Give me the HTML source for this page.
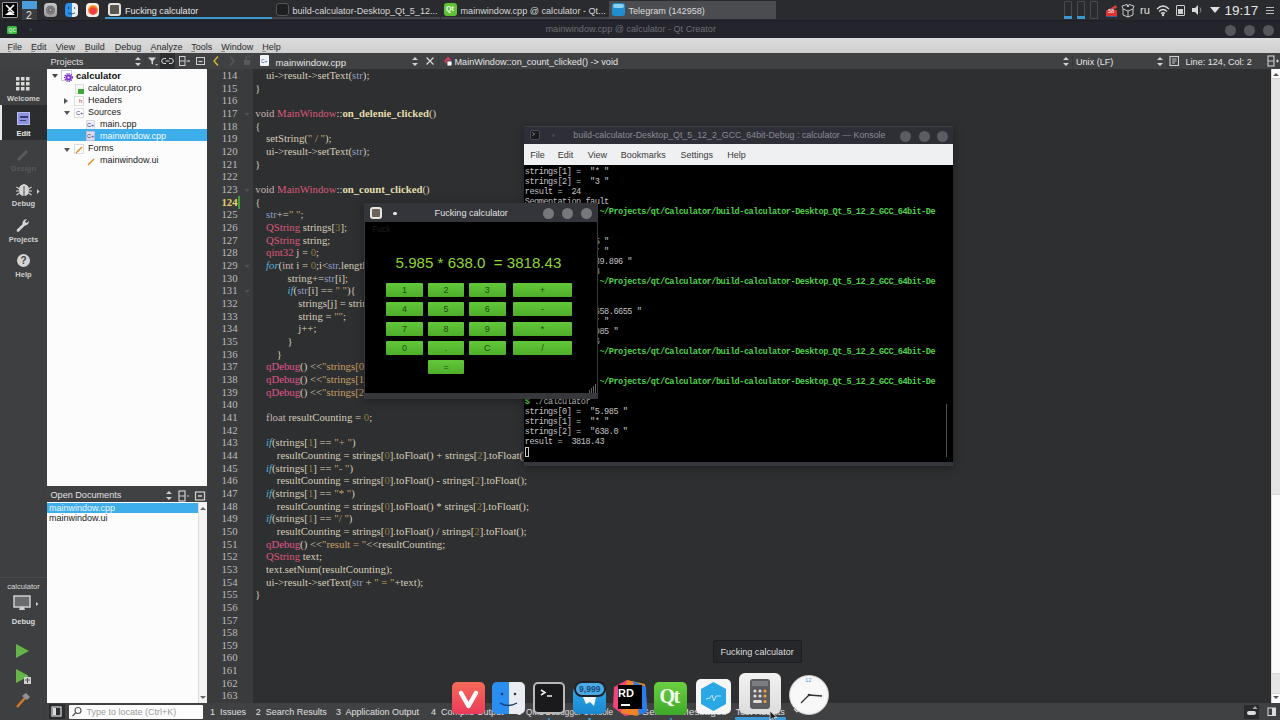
<!DOCTYPE html>
<html><head><meta charset="utf-8">
<style>
*{margin:0;padding:0;box-sizing:border-box}
html,body{width:1280px;height:720px;overflow:hidden;background:#2f3032;font-family:"Liberation Sans",sans-serif;font-size:9px;color:#ddd}
.a{position:absolute}
.t{position:absolute;white-space:pre;line-height:1}
/* top panel */
#panel{left:0;top:0;width:1280px;height:20px;background:#2a2b2f}
#title{left:0;top:20px;width:1280px;height:18px;background:#23242c;border-top:1px solid #1d1e23}
#menu{left:0;top:38px;width:1280px;height:15px;background:linear-gradient(#dcdcdc,#cfcfcf)}
#tool{left:0;top:53px;width:1280px;height:16px;background:#404143}
#modebar{left:0;top:69px;width:47px;height:651px;background:#3e3f41}
#tree{left:47px;top:69px;width:160px;height:417px;background:#fcfcfc}
#odhead{left:47px;top:486px;width:160px;height:16px;background:#404143}
#odlist{left:47px;top:502px;width:160px;height:201px;background:#fcfcfc}
#gutter{left:207px;top:69px;width:46px;height:634px;background:#3a3b3d}
#code{left:253px;top:69px;width:1018px;height:634px;background:#2e2f31}
#vscroll{left:1271px;top:69px;width:9px;height:634px;background:#fafafa;border-left:1px solid #d8d8d8}
#status{left:47px;top:703px;width:1233px;height:17px;background:#404143}
.ln{position:absolute;left:199px;width:38.5px;text-align:right;font-family:"Liberation Serif",serif;font-size:10.75px;color:#bdbdbd;white-space:pre;line-height:12.66px}
.ln.cur{color:#e4d36a;font-weight:bold}
.cl{position:absolute;left:255.3px;font-family:"Liberation Serif",serif;font-size:10.75px;color:#d6ceb6;white-space:pre;line-height:12.66px}
.kw{color:#c9b4b6}.ty{color:#dc5a7a}.fn{color:#e3dcab;font-weight:bold}.nu{color:#8f7a3c}.st{color:#c9a062}.mb{color:#8b9cc4}.ct{color:#58b4d8;font-style:italic}.qd{color:#e0558f}
/* konsole */
#kon{left:524px;top:126px;width:429px;height:340px;background:#36373c;box-shadow:0 2px 8px rgba(0,0,0,0.35)}
#kontitle{left:524px;top:126px;width:429px;height:18px;background:#2d2e36;border-top:1px solid #3d3e45}
#konmenu{left:524px;top:144px;width:429px;height:21px;background:#eff0f1}
#konterm{left:524px;top:165px;width:429px;height:297px;background:#000}
.tl{position:absolute;left:524.8px;font-family:"Liberation Mono",monospace;font-size:8.6px;letter-spacing:-0.495px;color:#c4c4c4;white-space:pre;line-height:10px}
.gr{color:#4fd14a;font-weight:bold}
/* calc */
#calc{left:364px;top:203px;width:234px;height:196px;background:#37383c;box-shadow:0 2px 8px rgba(0,0,0,0.35)}
#calctitle{left:364px;top:203px;width:234px;height:19px;background:#34353b}
#calcbody{left:365px;top:222px;width:232px;height:171px;background:#000}
.btn{position:absolute;height:14px;background:linear-gradient(#62c83a,#4eae2a);border-radius:1px;color:#1c4f10;font-size:9px;text-align:center;line-height:14px}
.cbtn{position:absolute;width:11px;height:11px;border-radius:50%;background:#6a6b6f}
</style></head><body>
<div class="a" id="panel"></div>
<div class="a" id="title"></div>
<div class="a" id="menu"></div>
<div class="a" id="tool"></div>
<div class="a" id="modebar"></div>
<!-- TOP PANEL -->
<div class="a" style="left:2px;top:2px;width:16px;height:16px;background:#000;border:1px solid #9a9a9a;border-radius:1px"></div>
<svg class="a" style="left:2px;top:2px" width="16" height="16"><path d="M4 3 L12 11 M12 3 L6 9" stroke="#fff" stroke-width="1.6"/><path d="M3 13 L8 9 L13 13 Z" fill="#fff"/></svg>
<div class="a" style="left:22px;top:1px;width:15px;height:19px;background:#3b3c40"></div>
<div class="a" style="left:22px;top:1px;width:15px;height:8px;background:#4a9fd8"></div>
<div class="t" style="left:26px;top:9.5px;font-size:10.5px;color:#e0e0e0">2</div>
<div class="a" style="left:44px;top:3px;width:13px;height:14px;border-radius:4px;background:linear-gradient(#c8c8c8,#9a9a9a)"></div>
<svg class="a" style="left:44px;top:3px" width="13" height="14"><circle cx="6.5" cy="7" r="4.5" fill="#6e6e6e"/><circle cx="6.5" cy="7" r="3.2" fill="none" stroke="#a8a8a8" stroke-width="0.8" stroke-dasharray="1 0.8"/><circle cx="6.5" cy="7" r="1.3" fill="#9a9a9a"/></svg>
<div class="a" style="left:65px;top:3px;width:13px;height:14px;border-radius:4px;background:linear-gradient(90deg,#2e8de8 55%,#e8eef5 55%)"></div>
<svg class="a" style="left:65px;top:3px" width="13" height="14"><circle cx="3.5" cy="5" r="0.7" fill="#123"/><circle cx="9.5" cy="5" r="0.7" fill="#333"/><path d="M3 10 Q6.5 12 10 10" stroke="#123" stroke-width="0.7" fill="none"/></svg>
<div class="a" style="left:86px;top:3px;width:13px;height:14px;border-radius:4px;background:#f4f0ec"></div>
<div class="a" style="left:88px;top:5px;width:10px;height:10px;border-radius:50%;background:radial-gradient(circle at 50% 60%,#f03a4a 35%,#f88a1a 60%,#fbb02c 75%)"></div>
<!-- tabs -->
<div class="a" style="left:105px;top:17px;width:167px;height:2px;background:#3d97cf"></div>
<div class="a" style="left:272px;top:17px;width:168px;height:2px;background:#45464a"></div>
<div class="a" style="left:441px;top:17px;width:168px;height:2px;background:#45464a"></div>
<div class="a" style="left:609px;top:1px;width:167px;height:18px;background:#4b4c50"></div>
<div class="a" style="left:108px;top:3px;width:13px;height:13px;border-radius:3px;background:#e6e2dc"></div>
<div class="a" style="left:110px;top:5px;width:9px;height:9px;border-radius:1px;background:#5a5650"></div>
<div class="t" style="left:125px;top:6.5px;font-size:9.1px;color:#e4e4e4">Fucking calculator</div>
<div class="a" style="left:276px;top:3px;width:13px;height:13px;border-radius:3px;background:#1e1f21;border:1px solid #555"></div>
<div class="t" style="left:292.5px;top:6.5px;font-size:9.1px;color:#d8d8d8">build-calculator-Desktop_Qt_5_12...</div>
<div class="a" style="left:444px;top:3px;width:13px;height:13px;border-radius:3px;background:#5ec337"></div>
<div class="t" style="left:446px;top:5px;font-size:7px;font-weight:bold;color:#fff">Qt</div>
<div class="t" style="left:460.5px;top:6.5px;font-size:9.1px;color:#d8d8d8">mainwindow.cpp @ calculator - Qt...</div>
<div class="a" style="left:612px;top:3px;width:13px;height:13px;border-radius:3px;background:#1f8fd0"></div>
<div class="a" style="left:613px;top:4px;width:11px;height:4px;border-radius:2px;background:#8ad0f0"></div>
<div class="t" style="left:628.5px;top:6.5px;font-size:9.1px;color:#dcdcdc">Telegram (142958)</div>
<!-- tray -->
<div class="a" style="left:1064px;top:1px;width:8px;height:18px;border:1px solid #4a4b50;border-radius:1px"></div>
<div class="a" style="left:1064px;top:16px;width:8px;height:3px;background:#3d97cf"></div>
<div class="a" style="left:1077px;top:1px;width:8px;height:18px;border:1px solid #4a4b50;border-radius:1px"></div>
<div class="a" style="left:1077px;top:16px;width:8px;height:3px;background:#3d97cf"></div>
<div class="a" style="left:1090px;top:1px;width:8px;height:18px;border:1px solid #4a4b50;border-radius:1px"></div>
<svg class="a" style="left:1104px;top:3px" width="15" height="14"><path d="M2 8 L12 2 L13 5 Z" fill="#e04040"/><rect x="2" y="7" width="11" height="7" rx="1" fill="#e03434"/><rect x="2" y="13" width="11" height="1" fill="#3a5fa0"/></svg>
<div class="t" style="left:1108px;top:8.5px;font-size:5.5px;color:#fff">58</div>
<svg class="a" style="left:1121px;top:3px" width="14" height="15"><path d="M2 6 L7 8 L12 6 L12 12 L7 14 L2 12 Z M7 8 L7 14 M2 6 L1 3 L6 1.5 L7 4 L8 1.5 L13 3 L12 6 M6 1.5 L7 4" stroke="#d8d8d8" fill="none" stroke-width="0.9"/></svg>
<div class="t" style="left:1140px;top:5px;font-size:11px;color:#e0e0e0">ru</div>
<svg class="a" style="left:1155px;top:3px" width="16" height="14"><path d="M2 6 Q8 0 14 6 M4 8.5 Q8 4.5 12 8.5 M6 10.5 Q8 9 10 10.5" stroke="#d8d8d8" fill="none" stroke-width="1.3"/><circle cx="8" cy="12" r="1.2" fill="#d8d8d8"/></svg>
<div class="a" style="left:1176px;top:5px;width:9px;height:11px;border:1.5px solid #d0d0d0;border-radius:1px"></div>
<div class="a" style="left:1178px;top:9px;width:5px;height:5px;background:#d0d0d0"></div>
<svg class="a" style="left:1191px;top:3px" width="12" height="14"><path d="M1 5 L4 5 L7 2 L7 12 L4 9 L1 9 Z" fill="#d8d8d8"/><path d="M9 4.5 Q11 7 9 9.5" stroke="#888" fill="none" stroke-width="1"/></svg>
<svg class="a" style="left:1209px;top:6px" width="12" height="8"><path d="M1 1 L11 1 L6 7 Z" fill="#e0e0e0"/></svg>
<div class="t" style="left:1224.5px;top:3.5px;font-size:13.5px;color:#e6e6e6">19:17</div>
<div class="a" style="left:1266px;top:7px;width:8px;height:1.2px;background:#bbb"></div>
<div class="a" style="left:1266px;top:10px;width:8px;height:1.2px;background:#bbb"></div>
<div class="a" style="left:1266px;top:13px;width:8px;height:1.2px;background:#bbb"></div>
<!-- TITLE BAR -->
<div class="a" style="left:7px;top:26px;width:10px;height:8px;background:#3cb83c;border-radius:1.5px"></div>
<div class="t" style="left:8.5px;top:27.5px;font-size:5px;font-weight:bold;color:#c8f0c8">QC</div>
<div class="a" style="left:29px;top:28px;width:3px;height:3px;background:#3a3b42;border-radius:50%"></div>
<div class="t" style="left:545.5px;top:25px;font-size:9.1px;color:#6d6e74">mainwindow.cpp @ calculator - Qt Creator</div>
<div class="cbtn" style="left:1225px;top:24.5px;background:#55565c"></div>
<div class="cbtn" style="left:1244px;top:24.5px;background:#55565c"></div>
<div class="cbtn" style="left:1263px;top:24.5px;background:#55565c"></div>
<!-- MENU -->
<div class="t" style="left:7.5px;top:42.5px;color:#2a2a2a">File</div>
<div class="t" style="left:31px;top:42.5px;color:#2a2a2a">Edit</div>
<div class="t" style="left:55.7px;top:42.5px;color:#2a2a2a">View</div>
<div class="t" style="left:84.8px;top:42.5px;color:#2a2a2a">Build</div>
<div class="t" style="left:114.8px;top:42.5px;color:#2a2a2a">Debug</div>
<div class="t" style="left:150.6px;top:42.5px;color:#2a2a2a">Analyze</div>
<div class="t" style="left:191.3px;top:42.5px;color:#2a2a2a">Tools</div>
<div class="t" style="left:221.3px;top:42.5px;color:#2a2a2a">Window</div>
<div class="t" style="left:262.3px;top:42.5px;color:#2a2a2a">Help</div>

<div class="a" id="tree"></div>
<div class="a" id="odhead"></div>
<div class="a" id="odlist"></div>
<div class="a" id="gutter"></div>
<div class="a" id="code"></div>
<div class="a" id="vscroll"></div>
<div class="a" id="status"></div>
<div class="a" style="left:7.5px;top:51px;width:3.5px;height:1px;background:#8a8a8a"></div>
<div class="a" style="left:31px;top:51px;width:3.5px;height:1px;background:#8a8a8a"></div>
<div class="a" style="left:55.7px;top:51px;width:3.5px;height:1px;background:#8a8a8a"></div>
<div class="a" style="left:84.8px;top:51px;width:3.5px;height:1px;background:#8a8a8a"></div>
<div class="a" style="left:114.8px;top:51px;width:3.5px;height:1px;background:#8a8a8a"></div>
<div class="a" style="left:150.6px;top:51px;width:3.5px;height:1px;background:#8a8a8a"></div>
<div class="a" style="left:191.3px;top:51px;width:3.5px;height:1px;background:#8a8a8a"></div>
<div class="a" style="left:221.3px;top:51px;width:3.5px;height:1px;background:#8a8a8a"></div>
<div class="a" style="left:262.3px;top:51px;width:3.5px;height:1px;background:#8a8a8a"></div>
<!-- MODE BAR -->
<div class="a" style="left:0;top:105px;width:47px;height:35px;background:#2c2d2f"></div>
<div class="a" style="left:0;top:105px;width:2px;height:35px;background:#e8e8e8"></div>
<svg class="a" style="left:16px;top:77px" width="14" height="14"><g fill="#d8d8d8"><rect x="0" y="0" width="3.5" height="3.5"/><rect x="5" y="0" width="3.5" height="3.5"/><rect x="10" y="0" width="3.5" height="3.5"/><rect x="0" y="5" width="3.5" height="3.5"/><rect x="5" y="5" width="3.5" height="3.5"/><rect x="10" y="5" width="3.5" height="3.5"/><rect x="0" y="10" width="3.5" height="3.5"/><rect x="5" y="10" width="3.5" height="3.5"/><rect x="10" y="10" width="3.5" height="3.5"/></g></svg>
<div class="t" style="left:0;width:47px;text-align:center;top:94.7px;font-size:7.5px;font-weight:bold;color:#cfcfcf">Welcome</div>
<div class="a" style="left:17px;top:112px;width:13px;height:13px;background:#8c94e0;border:1px solid #b8bcf0"></div>
<div class="a" style="left:19.5px;top:116px;width:8px;height:1.5px;background:#3a3d70"></div>
<div class="a" style="left:19.5px;top:119.5px;width:6px;height:1.5px;background:#3a3d70"></div>
<div class="t" style="left:0;width:47px;text-align:center;top:129.5px;font-size:7.5px;font-weight:bold;color:#e8e8e8">Edit</div>
<svg class="a" style="left:16px;top:148px" width="14" height="14"><path d="M2 12 L11 3" stroke="#5a5b5e" stroke-width="3"/></svg>
<div class="t" style="left:0;width:47px;text-align:center;top:165px;font-size:7.5px;font-weight:bold;color:#56575a">Design</div>
<svg class="a" style="left:15px;top:182px" width="26" height="16"><path d="M4 8 Q4 3 8 2.5 L8 2 L10 2 L10 2.5 Q14 3 14 8 Q14 14 9 14 Q4 14 4 8 Z" fill="#d4d4d4"/><path d="M9 4 L9 14" stroke="#3e3f41" stroke-width="0.9"/><path d="M1.5 5 L4.5 7 M1 9 L4 9 M1.5 13 L4.5 11 M16.5 5 L13.5 7 M17 9 L14 9 M16.5 13 L13.5 11" stroke="#d4d4d4" stroke-width="1.1"/><path d="M22 7 L24.5 9.5 L22 12 Z" fill="#cfcfcf"/></svg>
<div class="t" style="left:0;width:47px;text-align:center;top:200px;font-size:7.5px;font-weight:bold;color:#cfcfcf">Debug</div>
<svg class="a" style="left:16px;top:218px" width="14" height="14"><path d="M2 12.5 L8 6.5" stroke="#d4d4d4" stroke-width="2.6" stroke-linecap="round"/><path d="M6.5 6 A4 4 0 0 1 11 1.2 L9 3.5 L10.5 5 L12.8 3 A4 4 0 0 1 8 7.5 Z" fill="#d4d4d4"/></svg>
<div class="t" style="left:0;width:47px;text-align:center;top:235.5px;font-size:7.5px;font-weight:bold;color:#cfcfcf">Projects</div>
<div class="a" style="left:17px;top:254px;width:13px;height:13px;border-radius:50%;background:#d4d4d4"></div>
<div class="t" style="left:17px;width:13px;text-align:center;top:255.5px;font-size:10px;font-weight:bold;color:#3e3f41">?</div>
<div class="t" style="left:0;width:47px;text-align:center;top:271px;font-size:7.5px;font-weight:bold;color:#cfcfcf">Help</div>
<div class="a" style="left:0;top:576.5px;width:47px;height:1px;background:#4a4b4d"></div>
<div class="t" style="left:0;width:47px;text-align:center;top:583px;font-size:7.6px;color:#dcdcdc">calculator</div>
<svg class="a" style="left:13px;top:595px" width="28" height="20"><rect x="1" y="1" width="16" height="11" fill="#6a6b6e" stroke="#cfcfcf" stroke-width="1.5"/><path d="M7 12 L11 12 L12 15 L6 15 Z" fill="#cfcfcf"/><path d="M23 7 L25.5 9 L23 11 Z" fill="#cfcfcf"/></svg>
<div class="t" style="left:0;width:47px;text-align:center;top:618px;font-size:7.5px;font-weight:bold;color:#dcdcdc">Debug</div>
<svg class="a" style="left:15px;top:643px" width="16" height="16"><path d="M1 1 L14 8 L1 15 Z" fill="#66b54a"/></svg>
<svg class="a" style="left:15px;top:668px" width="18" height="18"><path d="M1 1 L14 8 L1 15 Z" fill="#66b54a"/><rect x="9" y="9" width="7" height="7" fill="#d0d0d0"/><path d="M10 12 L15 12 M12.5 10 L12.5 15" stroke="#555" stroke-width="1"/></svg>
<svg class="a" style="left:14px;top:692px" width="18" height="18"><path d="M3 15 L11 6" stroke="#d07a28" stroke-width="2.5"/><path d="M8 4 L12 1 L16 5 L13 8 Z" fill="#909296"/></svg>
<!-- PROJECTS HEADER -->
<div class="t" style="left:50.5px;top:57.5px;font-size:9.1px;color:#e0e0e0">Projects</div>
<svg class="a" style="left:134px;top:56px" width="8" height="11"><path d="M1 4 L4 1 L7 4 Z M1 7 L4 10 L7 7 Z" fill="#d0d0d0"/></svg>
<div class="a" style="left:145px;top:55px;width:1px;height:12px;background:#36373a"></div>
<svg class="a" style="left:147px;top:55px" width="12" height="12"><path d="M1 2.5 L9 2.5 L6 6 L6 9.5 L4.5 8.8 L4.5 6 Z" fill="#d4d4d4"/><path d="M8 9 L11 9 L9.5 10.8 Z" fill="#bbb"/></svg>
<div class="a" style="left:160px;top:53px;width:15px;height:16px;background:#2c2d2f"></div>
<svg class="a" style="left:161px;top:55px" width="13" height="12"><path d="M5 3.5 L3.2 3.5 A2.5 2.5 0 0 0 3.2 8.5 L5 8.5 M8 3.5 L9.8 3.5 A2.5 2.5 0 0 1 9.8 8.5 L8 8.5 M4.5 6 L8.5 6" stroke="#e0e0e0" fill="none" stroke-width="1"/></svg>
<svg class="a" style="left:178px;top:55px" width="13" height="12"><rect x="1.5" y="1.5" width="5.5" height="9" stroke="#cfcfcf" fill="none" stroke-width="1"/><path d="M1.5 6 L7 6 M8.5 6 L11.5 6 M10.5 5 L11.5 6 L10.5 7" stroke="#cfcfcf" fill="none" stroke-width="1"/></svg>
<svg class="a" style="left:195px;top:55px" width="11" height="12"><rect x="1.5" y="2.5" width="8" height="7" stroke="#cfcfcf" fill="none" stroke-width="1"/><path d="M3.5 6.5 L7.5 6.5" stroke="#cfcfcf" stroke-width="1.2"/></svg>
<!-- TREE -->
<svg class="a" style="left:51px;top:73px" width="8" height="6"><path d="M1 1 L7 1 L4 5 Z" fill="#444"/></svg>
<div class="a" style="left:61px;top:70px;width:11px;height:11px;background:#fff;border:1px solid #ccc"></div>
<svg class="a" style="left:64px;top:73px" width="9" height="9"><circle cx="4.5" cy="4.5" r="3" fill="#8030d0"/><circle cx="4.5" cy="4.5" r="3.8" fill="none" stroke="#8030d0" stroke-width="1.4" stroke-dasharray="1.2 1"/><circle cx="4.5" cy="4.5" r="1.1" fill="#fff"/></svg>
<div class="t" style="left:76px;top:71px;font-size:9.5px;font-weight:bold;color:#111">calculator</div>
<div class="a" style="left:75px;top:84px;width:9px;height:10px;background:#f8f8f8;border:1px solid #ddd"></div>
<div class="a" style="left:78px;top:89px;width:6px;height:5px;background:#3aaa3a"></div>
<div class="t" style="left:88px;top:84px;color:#222">calculator.pro</div>
<svg class="a" style="left:63px;top:97px" width="6" height="8"><path d="M1 1 L5 4 L1 7 Z" fill="#555"/></svg>
<div class="a" style="left:74px;top:96px;width:10px;height:10px;background:#fff;border:1px solid #ddd"></div>
<div class="t" style="left:79px;top:98px;font-size:6px;color:#c03030">h</div>
<div class="t" style="left:88px;top:96px;color:#222">Headers</div>
<svg class="a" style="left:63px;top:110px" width="8" height="6"><path d="M1 1 L7 1 L4 5 Z" fill="#555"/></svg>
<div class="a" style="left:74px;top:108px;width:10px;height:10px;background:#fff;border:1px solid #ddd"></div>
<div class="t" style="left:76px;top:111px;font-size:5.5px;color:#2c3c80">C+</div>
<div class="t" style="left:88px;top:108px;color:#222">Sources</div>
<div class="a" style="left:86px;top:120px;width:9px;height:10px;background:#eef;border:1px solid #ddd"></div>
<div class="t" style="left:87px;top:123px;font-size:5.5px;color:#2c3c80">C+</div>
<div class="t" style="left:100px;top:120px;color:#222">main.cpp</div>
<div class="a" style="left:47px;top:129.3px;width:160px;height:12.2px;background:#3daee9"></div>
<div class="a" style="left:86px;top:131px;width:9px;height:10px;background:#dde;border:1px solid #bbd"></div>
<div class="t" style="left:87px;top:134px;font-size:5.5px;color:#2c3c80">C+</div>
<div class="t" style="left:100px;top:132px;color:#f4fbff">mainwindow.cpp</div>
<svg class="a" style="left:63px;top:147px" width="8" height="6"><path d="M1 1 L7 1 L4 5 Z" fill="#555"/></svg>
<div class="a" style="left:74px;top:144px;width:10px;height:10px;background:#fff;border:1px solid #ddd"></div>
<svg class="a" style="left:74px;top:144px" width="10" height="10"><path d="M2 9 L8 3" stroke="#e08a20" stroke-width="1.5"/></svg>
<div class="t" style="left:88px;top:144px;color:#222">Forms</div>
<svg class="a" style="left:86px;top:156px" width="10" height="10"><path d="M2 9 L8 3" stroke="#e08a20" stroke-width="1.5"/></svg>
<div class="t" style="left:100px;top:156px;color:#222">mainwindow.ui</div>
<!-- OPEN DOCS -->
<div class="t" style="left:50.5px;top:491px;font-size:9.1px;color:#e0e0e0">Open Documents</div>
<svg class="a" style="left:165px;top:490px" width="8" height="11"><path d="M1 4 L4 1 L7 4 Z M1 7 L4 10 L7 7 Z" fill="#d0d0d0"/></svg>
<svg class="a" style="left:178px;top:490px" width="14" height="12"><rect x="1" y="1" width="6" height="10" stroke="#d0d0d0" fill="none" stroke-width="1.2"/><path d="M1 6 L7 6 M9 6 L11 6" stroke="#d0d0d0" fill="none" stroke-width="1.1"/></svg>
<svg class="a" style="left:194px;top:490px" width="12" height="12"><rect x="1.5" y="2" width="9" height="8" stroke="#d0d0d0" fill="none" stroke-width="1.2"/><path d="M4 6 L8 6" stroke="#d0d0d0" stroke-width="1.5"/></svg>
<div class="a" style="left:47px;top:502.5px;width:151px;height:10.5px;background:#3daee9"></div>
<div class="t" style="left:49px;top:503.5px;color:#eaf6ff">mainwindow.cpp</div>
<div class="t" style="left:49px;top:514px;color:#222">mainwindow.ui</div>
<div class="a" style="left:198px;top:502px;width:9px;height:201px;background:#f4f4f4;border-left:1px solid #ddd"></div>
<svg class="a" style="left:199px;top:505px" width="8" height="6"><path d="M1 5 L4 2 L7 5 Z" fill="#666"/></svg>
<svg class="a" style="left:199px;top:695px" width="8" height="6"><path d="M1 1 L4 4 L7 1 Z" fill="#666"/></svg>
<!-- STATUS BAR -->
<div class="a" style="left:49px;top:704px;width:16px;height:15px;background:#2c2d2f"></div>
<svg class="a" style="left:51px;top:706px" width="12" height="11"><rect x="1" y="1" width="9" height="9" fill="none" stroke="#ddd" stroke-width="1.2"/><rect x="2" y="2" width="3" height="7" fill="#ddd"/></svg>
<div class="a" style="left:68.5px;top:704.5px;width:134px;height:14px;background:#fcfcfc;border-radius:1px"></div>
<svg class="a" style="left:71px;top:706px" width="12" height="11"><circle cx="7" cy="4.5" r="3" fill="none" stroke="#555" stroke-width="1.1"/><path d="M5 6.5 L1.5 10" stroke="#555" stroke-width="1.3"/></svg>
<div class="t" style="left:86.5px;top:708px;color:#9c9c9c">Type to locate (Ctrl+K)</div>
<div class="t" style="left:210px;top:708px;color:#e0e0e0">1  Issues</div>
<div class="t" style="left:255.8px;top:708px;color:#e0e0e0">2  Search Results</div>
<div class="t" style="left:336px;top:708px;color:#e0e0e0">3  Application Output</div>
<div class="t" style="left:431px;top:708px;color:#e0e0e0">4  Compile Output</div>
<div class="t" style="left:517px;top:708px;color:#e0e0e0;transform-origin:0 0;transform:scaleX(0.9)">5  QML Debugger Console</div>
<div class="t" style="left:630px;top:708px;color:#e0e0e0;transform-origin:0 0;transform:scaleX(1.13)">6  General Messages</div>
<div class="t" style="left:735.7px;top:708px;color:#e0e0e0">Test Results</div>
<svg class="a" style="left:793px;top:707px" width="8" height="8"><path d="M1 2 L4 5 L7 2" stroke="#ccc" fill="none" stroke-width="1.2"/></svg>
<div class="a" style="left:1243.5px;top:704.5px;width:15.5px;height:14.5px;background:#2a2b2d"></div>
<div class="a" style="left:1246.8px;top:711px;width:9.5px;height:3.5px;background:#ddd;border-radius:2px"></div>
<svg class="a" style="left:1252px;top:705px" width="6" height="5"><path d="M0.5 4 L3 1 L5.5 4 Z" fill="#aaa"/></svg>
<svg class="a" style="left:1267px;top:707px" width="10" height="10"><rect x="1" y="1" width="7.5" height="7.5" fill="none" stroke="#ddd" stroke-width="1"/><rect x="5" y="1" width="3.5" height="7.5" fill="#ddd"/></svg>

<div class="ln" style="top:69.12px">114</div>
<div class="ln" style="top:81.78px">115</div>
<div class="ln" style="top:94.44px">116</div>
<div class="ln" style="top:107.10px">117</div>
<div class="ln" style="top:119.76px">118</div>
<div class="ln" style="top:132.42px">119</div>
<div class="ln" style="top:145.08px">120</div>
<div class="ln" style="top:157.74px">121</div>
<div class="ln" style="top:170.40px">122</div>
<div class="ln" style="top:183.06px">123</div>
<div class="ln cur" style="top:195.72px">124</div>
<div class="ln" style="top:208.38px">125</div>
<div class="ln" style="top:221.04px">126</div>
<div class="ln" style="top:233.70px">127</div>
<div class="ln" style="top:246.36px">128</div>
<div class="ln" style="top:259.02px">129</div>
<div class="ln" style="top:271.68px">130</div>
<div class="ln" style="top:284.34px">131</div>
<div class="ln" style="top:297.00px">132</div>
<div class="ln" style="top:309.66px">133</div>
<div class="ln" style="top:322.32px">134</div>
<div class="ln" style="top:334.98px">135</div>
<div class="ln" style="top:347.64px">136</div>
<div class="ln" style="top:360.30px">137</div>
<div class="ln" style="top:372.96px">138</div>
<div class="ln" style="top:385.62px">139</div>
<div class="ln" style="top:398.28px">140</div>
<div class="ln" style="top:410.94px">141</div>
<div class="ln" style="top:423.60px">142</div>
<div class="ln" style="top:436.26px">143</div>
<div class="ln" style="top:448.92px">144</div>
<div class="ln" style="top:461.58px">145</div>
<div class="ln" style="top:474.24px">146</div>
<div class="ln" style="top:486.90px">147</div>
<div class="ln" style="top:499.56px">148</div>
<div class="ln" style="top:512.22px">149</div>
<div class="ln" style="top:524.88px">150</div>
<div class="ln" style="top:537.54px">151</div>
<div class="ln" style="top:550.20px">152</div>
<div class="ln" style="top:562.86px">153</div>
<div class="ln" style="top:575.52px">154</div>
<div class="ln" style="top:588.18px">155</div>
<div class="ln" style="top:600.84px">156</div>
<div class="ln" style="top:613.50px">157</div>
<div class="ln" style="top:626.16px">158</div>
<div class="ln" style="top:638.82px">159</div>
<div class="ln" style="top:651.48px">160</div>
<div class="ln" style="top:664.14px">161</div>
<div class="ln" style="top:676.80px">162</div>
<div class="ln" style="top:689.46px">163</div>
<div class="cl" style="top:69.12px">    ui-&gt;result-&gt;setText(<span class="mb">str</span>);</div>
<div class="cl" style="top:81.78px">}</div>
<div class="cl" style="top:107.10px"><span class="kw">void </span><span class="ty">MainWindow</span>::<span class="fn">on_delenie_clicked</span>()</div>
<div class="cl" style="top:119.76px">{</div>
<div class="cl" style="top:132.42px">    setString(<span class="st">" / "</span>);</div>
<div class="cl" style="top:145.08px">    ui-&gt;result-&gt;setText(<span class="mb">str</span>);</div>
<div class="cl" style="top:157.74px">}</div>
<div class="cl" style="top:183.06px"><span class="kw">void </span><span class="ty">MainWindow</span>::<span class="fn">on_count_clicked</span>()</div>
<div class="cl" style="top:195.72px">{</div>
<div class="cl" style="top:208.38px">    <span class="mb">str</span>+=<span class="st">" "</span>;</div>
<div class="cl" style="top:221.04px">    <span class="ty">QString</span> strings[<span class="nu">3</span>];</div>
<div class="cl" style="top:233.70px">    <span class="ty">QString</span> string;</div>
<div class="cl" style="top:246.36px">    <span class="ty">qint32</span> j = <span class="nu">0</span>;</div>
<div class="cl" style="top:259.02px">    <span class="ct">for</span>(<span class="kw">int</span> i = <span class="nu">0</span>;i&lt;<span class="mb">str</span>.length();i++){</div>
<div class="cl" style="top:271.68px">            string+=<span class="mb">str</span>[i];</div>
<div class="cl" style="top:284.34px">            <span class="ct">if</span>(<span class="mb">str</span>[i] == <span class="st">" "</span>){</div>
<div class="cl" style="top:297.00px">                strings[j] = string;</div>
<div class="cl" style="top:309.66px">                string = <span class="st">""</span>;</div>
<div class="cl" style="top:322.32px">                j++;</div>
<div class="cl" style="top:334.98px">            }</div>
<div class="cl" style="top:347.64px">        }</div>
<div class="cl" style="top:360.30px">    <span class="qd">qDebug</span>() &lt;&lt;<span class="st">"strings[0] = "</span>&lt;&lt;strings[<span class="nu">0</span>];</div>
<div class="cl" style="top:372.96px">    <span class="qd">qDebug</span>() &lt;&lt;<span class="st">"strings[1] = "</span>&lt;&lt;strings[<span class="nu">1</span>];</div>
<div class="cl" style="top:385.62px">    <span class="qd">qDebug</span>() &lt;&lt;<span class="st">"strings[2] = "</span>&lt;&lt;strings[<span class="nu">2</span>];</div>
<div class="cl" style="top:410.94px">    <span class="kw">float</span> resultCounting = <span class="nu">0</span>;</div>
<div class="cl" style="top:436.26px">    <span class="ct">if</span>(strings[<span class="nu">1</span>] == <span class="st">"+ "</span>)</div>
<div class="cl" style="top:448.92px">        resultCounting = strings[<span class="nu">0</span>].toFloat() + strings[<span class="nu">2</span>].toFloat();</div>
<div class="cl" style="top:461.58px">    <span class="ct">if</span>(strings[<span class="nu">1</span>] == <span class="st">"- "</span>)</div>
<div class="cl" style="top:474.24px">        resultCounting = strings[<span class="nu">0</span>].toFloat() - strings[<span class="nu">2</span>].toFloat();</div>
<div class="cl" style="top:486.90px">    <span class="ct">if</span>(strings[<span class="nu">1</span>] == <span class="st">"* "</span>)</div>
<div class="cl" style="top:499.56px">        resultCounting = strings[<span class="nu">0</span>].toFloat() * strings[<span class="nu">2</span>].toFloat();</div>
<div class="cl" style="top:512.22px">    <span class="ct">if</span>(strings[<span class="nu">1</span>] == <span class="st">"/ "</span>)</div>
<div class="cl" style="top:524.88px">        resultCounting = strings[<span class="nu">0</span>].toFloat() / strings[<span class="nu">2</span>].toFloat();</div>
<div class="cl" style="top:537.54px">    <span class="qd">qDebug</span>() &lt;&lt;<span class="st">"result = "</span>&lt;&lt;resultCounting;</div>
<div class="cl" style="top:550.20px">    <span class="ty">QString</span> text;</div>
<div class="cl" style="top:562.86px">    text.setNum(resultCounting);</div>
<div class="cl" style="top:575.52px">    ui-&gt;result-&gt;setText(<span class="mb">str</span> + <span class="st">" = "</span>+text);</div>
<div class="cl" style="top:588.18px">}</div>
<!-- EDITOR TOOLBAR -->
<svg class="a" style="left:212px;top:55px" width="8" height="12"><path d="M6 1.5 L2 6 L6 10.5" stroke="#d8b838" fill="none" stroke-width="1.4"/></svg>
<svg class="a" style="left:228px;top:55px" width="8" height="12"><path d="M2 1.5 L6 6 L2 10.5" stroke="#58595c" fill="none" stroke-width="1.4"/></svg>
<svg class="a" style="left:243px;top:55px" width="10" height="12"><rect x="1" y="5" width="6" height="5" fill="#58595c"/><path d="M3 5 L3 3 A2 2 0 0 1 7 3" stroke="#58595c" fill="none" stroke-width="1.2"/></svg>
<div class="a" style="left:260px;top:55px;width:9px;height:11px;background:#f0f4fa;border-radius:1px"></div>
<div class="t" style="left:261px;top:59px;font-size:5px;color:#3050a0">C+</div>
<div class="t" style="left:275.6px;top:57.5px;font-size:9.6px;color:#e6e6e6">mainwindow.cpp</div>
<svg class="a" style="left:411px;top:56px" width="8" height="11"><path d="M1 4 L4 1 L7 4 Z M1 7 L4 10 L7 7 Z" fill="#d0d0d0"/></svg>
<svg class="a" style="left:425px;top:56px" width="10" height="10"><path d="M1.5 1.5 L8.5 8.5 M8.5 1.5 L1.5 8.5" stroke="#d8d8d8" stroke-width="1.2"/></svg>
<div class="a" style="left:438px;top:55px;width:1px;height:12px;background:#353638"></div>
<svg class="a" style="left:442px;top:55px" width="12" height="12"><path d="M2 6 L6 1.5 L10 6 L6 10.5 Z" fill="#d04060"/><rect x="5" y="6" width="5" height="5" fill="#fff" stroke="#333" stroke-width="0.8"/></svg>
<div class="t" style="left:454.5px;top:57.5px;font-size:9.1px;color:#e6e6e6">MainWindow::on_count_clicked() -> void</div>
<svg class="a" style="left:1062px;top:56px" width="8" height="11"><path d="M1 4 L4 1 L7 4 Z M1 7 L4 10 L7 7 Z" fill="#d0d0d0"/></svg>
<div class="a" style="left:1072px;top:55px;width:1px;height:12px;background:#353638"></div>
<div class="t" style="left:1076px;top:57.5px;font-size:9.1px;color:#e6e6e6">Unix (LF)</div>
<svg class="a" style="left:1156px;top:56px" width="8" height="11"><path d="M1 4 L4 1 L7 4 Z M1 7 L4 10 L7 7 Z" fill="#d0d0d0"/></svg>
<div class="a" style="left:1166px;top:55px;width:1px;height:12px;background:#353638"></div>
<svg class="a" style="left:1169px;top:55px" width="11" height="12"><rect x="1" y="1.5" width="8.5" height="9" fill="none" stroke="#d0d0d0" stroke-width="1.1"/><path d="M3 4 L7.5 4 M3 6 L7.5 6 M3 8 L6 8" stroke="#d0d0d0" stroke-width="0.9"/></svg>
<div class="t" style="left:1185.5px;top:57.5px;font-size:9.1px;color:#e6e6e6">Line: 124, Col: 2</div>
<svg class="a" style="left:1267px;top:55px" width="13" height="12"><rect x="1" y="1" width="6" height="10" stroke="#d0d0d0" fill="none" stroke-width="1.1"/><path d="M1 6 L7 6 M9 6 L12 6 M10.5 4.5 L10.5 7.5" stroke="#d0d0d0" fill="none" stroke-width="1"/></svg>
<div class="a" style="left:1272px;top:78px;width:8px;height:616px;background:#e4e4e4;border-top:1px solid #d4d4d4;border-bottom:1px solid #d4d4d4"></div>
<div class="a" style="left:1272px;top:494px;width:8px;height:180px;background:#fafafa;border-top:1px solid #d8d8d8;border-bottom:1px solid #d8d8d8"></div>
<svg class="a" style="left:1272px;top:71px" width="8" height="6"><path d="M1 5 L4 2 L7 5 Z" fill="#555"/></svg>
<svg class="a" style="left:1272px;top:695px" width="8" height="6"><path d="M1 1 L4 4 L7 1 Z" fill="#555"/></svg>
<div class="a" style="left:238px;top:196px;width:2px;height:13px;background:#3aa03a"></div>
<svg class="a" style="left:244px;top:112px" width="6" height="5"><path d="M0.5 1 L5.5 1 L3 4 Z" fill="#505154"/></svg>
<svg class="a" style="left:244px;top:188px" width="6" height="5"><path d="M0.5 1 L5.5 1 L3 4 Z" fill="#505154"/></svg>
<svg class="a" style="left:244px;top:264px" width="6" height="5"><path d="M0.5 1 L5.5 1 L3 4 Z" fill="#505154"/></svg>
<svg class="a" style="left:244px;top:288.5px" width="6" height="5"><path d="M0.5 1 L5.5 1 L3 4 Z" fill="#505154"/></svg>


<div class="a" id="kon"></div>
<div class="a" id="kontitle"></div>
<div class="a" id="konmenu"></div>
<div class="a" id="konterm"></div>
<div class="tl" style="top:166.5px">strings[1] =  "* "</div>
<div class="tl" style="top:176.5px">strings[2] =  "3 "</div>
<div class="tl" style="top:186.5px">result =  24</div>
<div class="tl" style="top:196.5px">Segmentation fault</div>
<div class="tl" style="top:206.5px"><span class="gr">user@archlinux  </span><span class="gr">~/Projects/qt/Calculator/build-calculator-Desktop_Qt_5_12_2_GCC_64bit-De</span></div>
<div class="tl" style="top:216.5px"><span class="gr">bug</span></div>
<div class="tl" style="top:226.5px"><span class="gr">$ </span>./calculator</div>
<div class="tl" style="top:236.5px">strings[0] =  "5 "</div>
<div class="tl" style="top:246.5px">strings[1] =  "* "</div>
<div class="tl" style="top:256.5px">strings[2] =  "39.896 "</div>
<div class="tl" style="top:266.5px">result =  199.48</div>
<div class="tl" style="top:276.5px"><span class="gr">user@archlinux  </span><span class="gr">~/Projects/qt/Calculator/build-calculator-Desktop_Qt_5_12_2_GCC_64bit-De</span></div>
<div class="tl" style="top:286.5px"><span class="gr">bug</span></div>
<div class="tl" style="top:296.5px"><span class="gr">$ </span>./calculator</div>
<div class="tl" style="top:306.5px">strings[0] =  "658.6655 "</div>
<div class="tl" style="top:316.5px">strings[1] =  "* "</div>
<div class="tl" style="top:326.5px">strings[2] =  "985 "</div>
<div class="tl" style="top:336.5px">result =  648786</div>
<div class="tl" style="top:346.5px"><span class="gr">user@archlinux  </span><span class="gr">~/Projects/qt/Calculator/build-calculator-Desktop_Qt_5_12_2_GCC_64bit-De</span></div>
<div class="tl" style="top:356.5px"><span class="gr">bug</span></div>
<div class="tl" style="top:366.5px"><span class="gr">$ </span></div>
<div class="tl" style="top:376.5px"><span class="gr">user@archlinux  </span><span class="gr">~/Projects/qt/Calculator/build-calculator-Desktop_Qt_5_12_2_GCC_64bit-De</span></div>
<div class="tl" style="top:386.5px"><span class="gr">bug</span></div>
<div class="tl" style="top:396.5px"><span class="gr">$ </span>./calculator</div>
<div class="tl" style="top:406.5px">strings[0] =  "5.985 "</div>
<div class="tl" style="top:416.5px">strings[1] =  "* "</div>
<div class="tl" style="top:426.5px">strings[2] =  "638.0 "</div>
<div class="tl" style="top:436.5px">result =  3818.43</div>
<div class="a" style="left:530px;top:130px;width:10px;height:10px;background:#1a1b1d;border:1px solid #4a4b50;border-radius:2px"></div>
<svg class="a" style="left:531px;top:131px" width="8" height="8"><path d="M1.5 1.5 L3.5 3 L1.5 4.5" stroke="#aaa" fill="none" stroke-width="0.8"/></svg>
<div class="a" style="left:552px;top:134px;width:3px;height:3px;border-radius:50%;background:#44454c"></div>
<div class="t" style="left:573.3px;top:131px;font-size:8.85px;color:#8a8b92">build-calculator-Desktop_Qt_5_12_2_GCC_64bit-Debug : calculator — Konsole</div>
<div class="cbtn" style="left:900px;top:130.5px;background:#5c5d62"></div>
<div class="cbtn" style="left:918.5px;top:130.5px;background:#5c5d62"></div>
<div class="cbtn" style="left:937px;top:130.5px;background:#5c5d62"></div>
<div class="t" style="left:530.3px;top:150.5px;color:#3a3a3a">File</div>
<div class="t" style="left:557.8px;top:150.5px;color:#3a3a3a">Edit</div>
<div class="t" style="left:587.7px;top:150.5px;color:#3a3a3a">View</div>
<div class="t" style="left:620.7px;top:150.5px;color:#3a3a3a">Bookmarks</div>
<div class="t" style="left:680.5px;top:150.5px;color:#3a3a3a">Settings</div>
<div class="t" style="left:727.2px;top:150.5px;color:#3a3a3a">Help</div>
<div class="a" style="left:945.5px;top:404px;width:1.5px;height:53px;background:#505050"></div>
<div class="a" style="left:525px;top:446.5px;width:4px;height:10px;border:1px solid #c8c8c8"></div>


<div class="a" id="calc"></div>
<div class="a" id="calctitle"></div>
<div class="a" id="calcbody"></div>
<div class="a" style="left:370px;top:207px;width:12px;height:12px;border-radius:3px;background:#e8e4dc"></div>
<div class="a" style="left:372px;top:209px;width:8px;height:8px;border-radius:1px;background:#6a645a"></div>
<div class="a" style="left:393px;top:211.5px;width:3.5px;height:3.5px;border-radius:50%;background:#e8e8e8"></div>
<div class="t" style="left:434.6px;top:208.5px;font-size:9.1px;color:#e0e0e0">Fucking calculator</div>
<div class="cbtn" style="left:543.3px;top:208px;background:#77787c"></div>
<div class="cbtn" style="left:562px;top:208px;background:#77787c"></div>
<div class="cbtn" style="left:580.5px;top:208px;background:#77787c"></div>
<div class="t" style="left:372px;top:224.5px;font-size:8.5px;color:#1c1c1c">Fuck</div>
<div class="t" style="left:395.6px;top:255px;font-size:15.1px;color:#8fd633">5.985 * 638.0  = 3818.43</div>
<div class="btn" style="left:386px;top:282.7px;width:37px">1</div>
<div class="btn" style="left:427.8px;top:282.7px;width:36.5px">2</div>
<div class="btn" style="left:469px;top:282.7px;width:36.5px">3</div>
<div class="btn" style="left:512.7px;top:282.7px;width:59.5px">+</div>
<div class="btn" style="left:386px;top:302.1px;width:37px">4</div>
<div class="btn" style="left:427.8px;top:302.1px;width:36.5px">5</div>
<div class="btn" style="left:469px;top:302.1px;width:36.5px">6</div>
<div class="btn" style="left:512.7px;top:302.1px;width:59.5px">-</div>
<div class="btn" style="left:386px;top:321.5px;width:37px">7</div>
<div class="btn" style="left:427.8px;top:321.5px;width:36.5px">8</div>
<div class="btn" style="left:469px;top:321.5px;width:36.5px">9</div>
<div class="btn" style="left:512.7px;top:321.5px;width:59.5px">*</div>
<div class="btn" style="left:386px;top:340.9px;width:37px">0</div>
<div class="btn" style="left:427.8px;top:340.9px;width:36.5px">.</div>
<div class="btn" style="left:469px;top:340.9px;width:36.5px">C</div>
<div class="btn" style="left:512.7px;top:340.9px;width:59.5px">/</div>
<div class="btn" style="left:427.8px;top:360.3px;width:36.5px">=</div>
<svg class="a" style="left:588px;top:383px" width="9" height="10"><g fill="#666"><rect x="1" y="7" width="1" height="3"/><rect x="3" y="5" width="1" height="5"/><rect x="5" y="3" width="1" height="7"/><rect x="7" y="1" width="1" height="9"/></g></svg>


<!-- DOCK -->
<div class="a" style="left:713.4px;top:639.7px;width:89px;height:23.4px;background:#26272a;border:1px solid #1d1e20;border-radius:2px"></div>
<div class="t" style="left:720.5px;top:647.5px;font-size:9.1px;color:#dedede">Fucking calculator</div>
<div class="a" style="left:451.5px;top:681.5px;width:33px;height:32.5px;border-radius:5px;background:linear-gradient(#f46a58,#ec3a5a)"></div>
<svg class="a" style="left:451.5px;top:681.5px" width="33" height="33"><path d="M9 11 L16.5 24 L24 11" stroke="#fff" stroke-width="4.5" fill="none" stroke-linecap="round" stroke-linejoin="round"/></svg>
<div class="a" style="left:492px;top:681.5px;width:32.5px;height:32.5px;border-radius:5px;background:linear-gradient(90deg,#2a8ef0 0%,#2a8ef0 52%,#e9ecf2 52%)"></div>
<svg class="a" style="left:492px;top:681.5px" width="33" height="33"><circle cx="10" cy="12" r="1.3" fill="#1a3a6a"/><circle cx="23" cy="12" r="1.3" fill="#333"/><path d="M8 21 Q16 26 25 21" stroke="#1a3a6a" stroke-width="1.4" fill="none"/></svg>
<div class="a" style="left:532.5px;top:681.5px;width:32.5px;height:32.5px;border-radius:5px;background:#1a1a1c;border:2px solid #b8b8b8"></div>
<svg class="a" style="left:532.5px;top:681.5px" width="33" height="33"><path d="M8 8 L12 10.5 L8 13" stroke="#f0f0f0" stroke-width="1.5" fill="none"/><path d="M14 14 L19 14" stroke="#f0f0f0" stroke-width="1.5"/></svg>
<div class="a" style="left:573.2px;top:686px;width:32.6px;height:28px;border-radius:6px;background:linear-gradient(#2ea6ea,#1a88d0)"></div>
<svg class="a" style="left:573.2px;top:686px" width="33" height="28"><path d="M10 11 L23 11 L21 20 L17 16 L13 18 Z" fill="#f4f8fc"/></svg>
<div class="a" style="left:574px;top:681px;width:31.5px;height:16px;border-radius:8px;background:#4aaae8;border:2px solid #1e2226"></div>
<div class="t" style="left:574px;width:31.5px;text-align:center;top:684.5px;font-size:8.5px;font-weight:bold;color:#1a4a78">9,999</div>
<svg class="a" style="left:611px;top:679px" width="37" height="38"><path d="M3 8 L16 1 L30 5 L34 20 L30 34 L14 37 L2 28 Z" fill="#f0447a"/><path d="M16 1 L34 5 L36 30 L26 37 L10 34 Z" fill="#f28a1e" opacity="0.9"/><path d="M22 2 L35 8 L36 33 L28 36 Z" fill="#2a7de8"/><rect x="7" y="6" width="24" height="24" fill="#000"/><rect x="10" y="25" width="9" height="2" fill="#fff"/></svg>
<div class="t" style="left:618px;top:688px;font-size:11px;font-weight:bold;color:#fff">RD</div>
<div class="a" style="left:654.4px;top:681.5px;width:32.5px;height:33px;border-radius:5px;background:linear-gradient(#6ad040,#3ea82a)"></div>
<div class="t" style="left:659.5px;top:686px;font-family:'Liberation Serif',serif;font-size:20px;font-weight:bold;color:#f4fff0;letter-spacing:-1.5px">Qt</div>
<div class="a" style="left:695.5px;top:678.5px;width:35px;height:35px;border-radius:5px;background:#f6f6f6"></div>
<svg class="a" style="left:695.5px;top:678.5px" width="35" height="35"><path d="M17.5 3 L30 10 L30 25 L17.5 32 L5 25 L5 10 Z" fill="#2aa8e6"/><path d="M10 20 L14 19 L16 16 L18 22 L20 17 L25 17" stroke="#bfe6fa" stroke-width="1" fill="none"/></svg>
<div class="a" style="left:739.2px;top:673px;width:41.5px;height:41px;border-radius:6px;background:linear-gradient(#f2f2f2,#dcdcdc)"></div>
<div class="a" style="left:750px;top:678.5px;width:20px;height:30px;border-radius:3px;background:#5a5c60"></div>
<div class="a" style="left:752px;top:681px;width:16px;height:5px;background:#7c7e82"></div>
<svg class="a" style="left:750px;top:678.5px" width="20" height="30"><g fill="#ddd"><circle cx="5" cy="12" r="1.6"/><circle cx="10" cy="12" r="1.6"/><circle cx="5" cy="17" r="1.6"/><circle cx="10" cy="17" r="1.6"/><rect x="3" y="21" width="9" height="3" rx="1.5"/></g><g fill="#f0a030"><circle cx="15" cy="12" r="1.6"/><circle cx="15" cy="17" r="1.6"/><circle cx="15" cy="22.5" r="1.6"/></g></svg>
<div class="a" style="left:789.2px;top:674.5px;width:40px;height:40px;border-radius:50%;background:radial-gradient(circle,#f8f8f8 60%,#e6e6e6 100%);border:1px solid #cfcfcf"></div>
<div class="t" style="left:805px;top:677px;font-size:6px;color:#50a0e0">12</div>
<svg class="a" style="left:789.2px;top:674.5px" width="40" height="40"><path d="M20 20 L12 28 M20 20 L33 21" stroke="#333" stroke-width="1.3"/><circle cx="20" cy="20" r="1.3" fill="#333"/></svg>
<div class="a" style="left:734.5px;top:717px;width:51px;height:3px;background:#3d9ad8;border-radius:1px"></div>
<div class="a" style="left:547.5px;top:717.5px;width:2.5px;height:2.5px;background:#3d9ad8;border-radius:50%"></div>
<div class="a" style="left:588px;top:717.5px;width:2.5px;height:2.5px;background:#3d9ad8;border-radius:50%"></div>
<div class="a" style="left:669.5px;top:717.5px;width:2.5px;height:2.5px;background:#3d9ad8;border-radius:50%"></div>
<svg class="a" style="left:769px;top:710px" width="10" height="12"><path d="M1 1 L1 10 L3.5 8 L5.5 11.5 L7 11 L5 7.5 L8 7.5 Z" fill="#222" stroke="#ddd" stroke-width="0.8"/></svg>
</body></html>
